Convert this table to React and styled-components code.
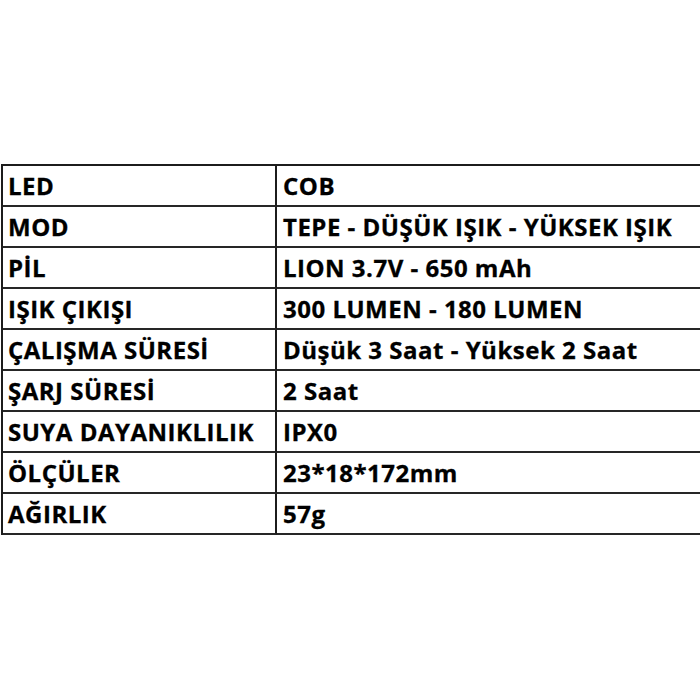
import React from "react";
import styled, { createGlobalStyle } from "styled-components";

const Global = createGlobalStyle`
  html, body {
    margin: 0;
    padding: 0;
    background: #ffffff;
  }
`;

const Page = styled.div`
  width: 700px;
  height: 700px;
  overflow: hidden;
  padding-top: 164px;
  box-sizing: border-box;
  background: #fff;
`;

const Table = styled.div`
  display: grid;
  grid-template-columns: 274px 1fr;
  margin-left: 1px;
  border-top: 2px solid #1c1c1c;
  border-left: 2px solid #1c1c1c;
`;

const Cell = styled.div`
  height: 39px;
  display: flex;
  align-items: center;
  padding-left: ${(p) => (p.$value ? "6px" : "5px")};
  border-bottom: 2px solid #262626;
  border-right: ${(p) => (p.$value ? "none" : "2px solid #1c1c1c")};
  font-family: "Open Sans", Lato, sans-serif;
  font-weight: 700;
  font-size: 24px;
  color: #000;
  white-space: nowrap;
  letter-spacing: ${(p) => (p.$value ? "0.5px" : "0.5px")};
  -webkit-text-stroke: 0.3px #000;
`;

const rows = [
  ["LED", "COB"],
  ["MOD", "TEPE - DÜŞÜK IŞIK - YÜKSEK IŞIK"],
  ["PİL", "LION 3.7V - 650 mAh"],
  ["IŞIK ÇIKIŞI", "300 LUMEN - 180 LUMEN"],
  ["ÇALIŞMA SÜRESİ", "Düşük 3 Saat - Yüksek 2 Saat"],
  ["ŞARJ SÜRESİ", "2 Saat"],
  ["SUYA DAYANIKLILIK", "IPX0"],
  ["ÖLÇÜLER", "23*18*172mm"],
  ["AĞIRLIK", "57g"],
];

export default function App() {
  return (
    <Page>
      <Global />
      <Table>
        {rows.map(([k, v]) => (
          <React.Fragment key={k}>
            <Cell>{k}</Cell>
            <Cell $value>{v}</Cell>
          </React.Fragment>
        ))}
      </Table>
    </Page>
  );
}
